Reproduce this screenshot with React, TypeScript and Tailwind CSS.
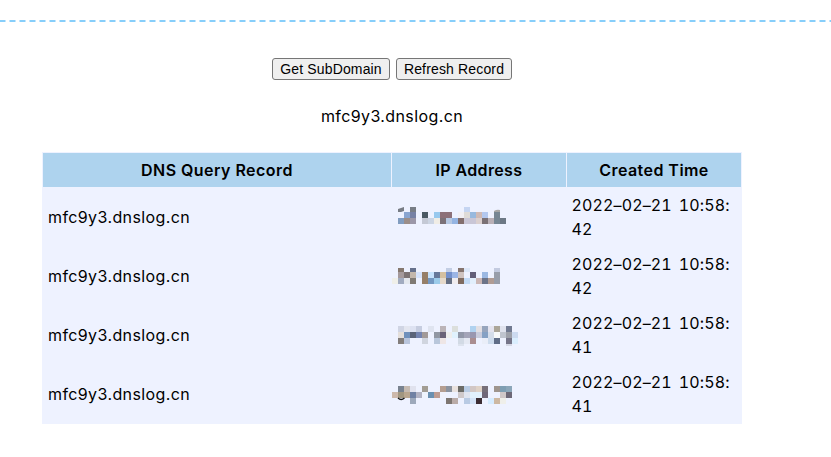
type Mosaic = { left: string; rows: string[]; clip: string };

const mosaics: Mosaic[] = [
  {
    left: "ml-[6px] mt-[-5px]",
    clip: "inset(1px 0 0 0)",
    rows: [
      "cut - 777d86 - - - - - - - - c5d5f2 - - - - - -",
      "- 89a5d0 7681a5 - 4a5963 - 98c9ee 8c7079 8c7079 - f2f0f5 dfdbd7 98b9de cfbab5 b3c8ef - 768693 -",
      "819dc0 9b8e89 9b97a8 - c4c9d5 ccd5e3 f0ede6 7b7178 b6c8e2 94b4e2 836f6e c9c6d6 c9c6d6 dbd0cf 7a7175 b9b0b6 768693 6c7885",
    ],
  },
  {
    left: "ml-0 mt-[-3px]",
    clip: "inset(2px 0 0 0)",
    rows: [
      "- 85786f - 66718c - - - - - c3cee4 - 85746e dce7f8 - - - - c3cbe0",
      "- a4999b 7c7374 c4b8ac d5e3fc 967f68 c6e2fc 66789a d5c0a0 7390cc 9bb5e5 cfc3bf - 635f78 - 9bb8e2 - 989eaa",
      "efefe9 a1abc0 e4e8ee 7f7a74 - 967f68 7297c1 9bcbea e6dacb 656f83 f0edf0 7f6b60 c3dbf6 e2effc cbb7b5 6c7488 b09c94 989eaa",
    ],
  },
  {
    left: "ml-[6px] mt-[5px]",
    clip: "inset(0 0 4px 0)",
    rows: [
      "d0d5e4 e3e6f0 dde2f2 c6cde0 - dfe4f0 - bbb4b8 - dcdfdc - - b0d2f0 e2dfe3 96a5bd e4e4ef aba699 dfe2ed 707990 -",
      "e4dfdb 6f90bb 5b6479 7484b0 a29a98 - 9197a2 6b6379 eeeeee e0f1fd 9197a8 a3a4b8 9997b0 c9ccdc 85a1c4 d4ddea f7f9fa bfc4ce 9da0a9 ccdaf0",
      "827d7b b9c5dc - - d0d5df - b9c7db eee6e6 - - d2dae5 e5e9f3 aa8e90 - eaeef8 cddced 5f6d87 - 767589 daeefe",
      "- - - - - - - - - - dde3ee - - - - - - - d5d8e5 -",
    ],
  },
  {
    left: "ml-0 mt-px",
    clip: "inset(0 0 0 0)",
    rows: [
      "- 78828f c5bab1 e0e2ee - a29d94 - - b49e91 8b939f e9e2df 6b6b67 b9cce4 d2c7c5 dfd2c7 766f79 - 9e958e 7e9eb3 8ba6b9",
      "cdb9ac a19680 b9a68f 7081a3 b2b3c3 eef3fd 6a90b1 be9c92 f0f2fc - - cfc9ca e0e5f0 e2f1fd e2f1fd 706879 - - cfc7c8 6d6877",
      "- arc - 9da9bb - - - - - 7d7671 baaca8 - b9cbe4 d4e3f7 3c2d33 - d6ecff cdb8a2 efefea -",
    ],
  },
];

const seconds = ["42", "42", "41", "41"];

function Redacted({ left, rows, clip }: Mosaic) {
  const cells = rows.map((row) => row.split(" "));
  return (
    <svg
      className={`block shrink-0 ${left}`}
      style={{ clipPath: clip }}
      width={cells[0].length * 6}
      height={rows.length * 6}
      shapeRendering="crispEdges"
      aria-hidden="true"
    >
      {cells.map((row, y) =>
        row.map((color, x) => {
          if (color === "-") return null;
          if (color === "cut")
            return (
              <g key={`${x}-${y}`} shapeRendering="auto">
                <path d="M0 3L6 1V5L3 6H0z" fill="#777c84" />
                <path d="M96 6V5q3-2 6-1v2z" fill="#a7a7a6" />
              </g>
            );
          if (color === "arc")
            return (
              <path
                key={`${x}-${y}`}
                d={`M${x * 6} ${y * 6} Q${x * 6 + 3} ${y * 6 + 3} ${x * 6 + 6.5} ${y * 6}`}
                fill="none"
                stroke="#111"
                strokeWidth="1.3"
                shapeRendering="auto"
              />
            );
          return <rect key={`${x}-${y}`} x={x * 6} y={y * 6} width="6" height="6" fill={`#${color}`} />;
        }),
      )}
    </svg>
  );
}

const buttonClass =
  "h-[22px] rounded-[3px] border border-[#767676] bg-[#efefef] text-center font-['Liberation_Sans',Arial,sans-serif] text-[14px] leading-[20px] tracking-[0.15px] whitespace-nowrap";

export default function App() {
  return (
    <main className="h-[457px] overflow-hidden bg-white pt-5 font-[Inter,sans-serif] text-[16px] leading-6 tracking-[0.39px] text-black">
      <div className="h-[2px] bg-[repeating-linear-gradient(90deg,#87cefa_0_5px,#c3e6fc_5px_6px,transparent_6px_9px,#c3e6fc_9px_10px)]" />
      <div className="ml-[42px] w-[700px]">
        <div className="mt-9 flex justify-center gap-[6px]">
          <button className={`${buttonClass} w-[118px]`}>Get SubDomain</button>
          <button className={`${buttonClass} w-[116px]`}>Refresh Record</button>
        </div>
        <div className="mt-6 text-center">mfc9y3.dnslog.cn</div>
        <div className="mt-6 h-[272px] bg-[#eef2ff]">
          <div className="grid h-9 grid-cols-[348px_174px_174px] gap-px px-px pt-px pb-px text-center leading-[34px] font-semibold tracking-[0.45px]">
            <div className="bg-[#aed3ee]">DNS Query Record</div>
            <div className="bg-[#aed3ee] tracking-[0.37px]">IP Address</div>
            <div className="bg-[#aed3ee]">Created Time</div>
          </div>
          {mosaics.map((mosaic, i) => (
            <div key={i} className="grid h-[59px] grid-cols-[350px_175px_175px] items-center">
              <div className="pb-[2px] pl-[6px]">mfc9y3.dnslog.cn</div>
              <Redacted {...mosaic} />
              <div className="pb-[2px] pl-[4.5px] tracking-[0.13px] whitespace-nowrap tabular-nums [word-spacing:2.5px]">
                2022–02–21 10:58:
                <br />
                {seconds[i]}
              </div>
            </div>
          ))}
        </div>
      </div>
    </main>
  );
}
